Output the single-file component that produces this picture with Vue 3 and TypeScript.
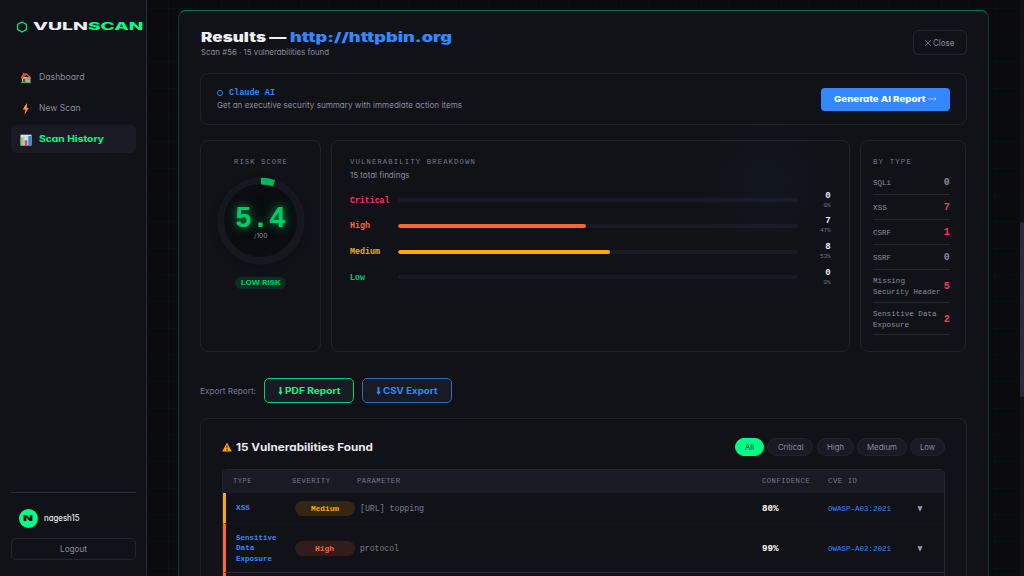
<script setup lang="ts">
import type { Directive } from 'vue'

// Sizes a run of text to an exact advance width by stretching its glyphs.
const vFit: Directive<HTMLElement, number> = {
  mounted(el, binding) {
    const natural = el.getBoundingClientRect().width
    if (!natural) return
    el.style.width = `${binding.value}px`
    el.style.transform = `scaleX(${binding.value / natural})`
  },
}

const severities = [
  { name: 'Critical', w: 39.5, count: 0, pct: 0, bar: 0, tone: 'critical' },
  { name: 'High', w: 20, count: 7, pct: 47, bar: 47, tone: 'high' },
  { name: 'Medium', w: 30, count: 8, pct: 53, bar: 53, tone: 'medium' },
  { name: 'Low', w: 15, count: 0, pct: 0, bar: 0, tone: 'low' },
]

const types = [
  { lines: [{ t: 'SQLi', w: 18 }], count: 0 },
  { lines: [{ t: 'XSS', w: 14 }], count: 7 },
  { lines: [{ t: 'CSRF', w: 18 }], count: 1 },
  { lines: [{ t: 'SSRF', w: 18 }], count: 0 },
  { lines: [{ t: 'Missing', w: 32 }, { t: 'Security Header', w: 67.5 }], count: 5 },
  { lines: [{ t: 'Sensitive Data', w: 63.5 }, { t: 'Exposure', w: 36 }], count: 2 },
]

const filters = [
  { name: 'All', w: 9, box: 29 },
  { name: 'Critical', w: 25.5, box: 46 },
  { name: 'High', w: 17, box: 37 },
  { name: 'Medium', w: 30, box: 50 },
  { name: 'Low', w: 15, box: 35 },
]

const rows = [
  { type: [{ t: 'XSS', w: 14 }], sev: 'Medium', sw: 28, tone: 'medium', param: '[URL] topping', pw: 64, conf: '80%', cve: 'OWASP-A03:2021' },
  { type: [{ t: 'Sensitive', w: 40.5 }, { t: 'Data', w: 18.5 }, { t: 'Exposure', w: 36 }], sev: 'High', sw: 19, tone: 'high', param: 'protocol', pw: 39, conf: '99%', cve: 'OWASP-A02:2021' },
]
</script>

<template>
  <div class="app">
    <aside class="sidebar">
      <div class="logo">
        <svg class="hex" width="12" height="12" viewBox="0 0 12 12"><path d="M6 1 10.4 3.4V8.6L6 11 1.6 8.6V3.4Z" /></svg>
        <span v-fit="55" class="fit logo-a">VULN</span><span v-fit="55.5" class="fit logo-b">SCAN</span>
      </div>
      <nav>
        <a class="nav-item">
          <svg width="12" height="12" viewBox="0 0 12 12">
            <rect x="2" y="5" width="8.5" height="5.5" fill="#d9a679" /><path d="M.5 5.8 3 2V.8h1.5V2L6.3.8l5.2 5-1 .8L6.3 3 2 6.8Z" fill="#d4573a" />
            <rect x="3" y="6.8" width="2.2" height="3.7" fill="#6d4436" /><rect x="6.9" y="5.8" width="2.4" height="2.4" fill="#42a5f5" /><path d="M1 10h10v1.2H1z" fill="#43a057" />
          </svg>
          <span v-fit="45.5" class="fit">Dashboard</span>
        </a>
        <a class="nav-item">
          <svg width="12" height="12" viewBox="0 0 12 12"><path d="M6.8.3 2.7 6.5l2.6.2L4.4 11.8 8.9 5.1 6.4 4.8Z" fill="#ff8142" /><path d="M6.8.3 4 5l2.5-.2Z" fill="#ffb057" /></svg>
          <span v-fit="41.5" class="fit">New Scan</span>
        </a>
        <a class="nav-item active">
          <svg width="12" height="12" viewBox="0 0 12 12">
            <rect x=".5" y=".7" width="11" height="10.8" fill="#dce3e6" /><path d="M.5 4h11M.5 7.5h11M4.3.7v10.8M8 .7v10.8" stroke="#b0bec5" stroke-width=".4" />
            <rect x="1" y="3.4" width="2.6" height="8.1" fill="#8bd15f" /><rect x="4.7" y="6.3" width="2.6" height="5.2" fill="#f0368a" /><rect x="8.3" y="2" width="2.7" height="9.5" fill="#2f8fe0" />
          </svg>
          <span v-fit="65" class="fit">Scan History</span>
        </a>
      </nav>
      <div class="side-foot">
        <div class="user">
          <span class="avatar"><span v-fit="10" class="fit">N</span></span>
          <span v-fit="35.5" class="fit user-name">nagesh15</span>
        </div>
        <button class="logout"><span v-fit="27" class="fit">Logout</span></button>
      </div>
    </aside>

    <main class="main">
      <section class="panel">
        <header class="head">
          <div>
            <h1><span v-fit="85.5" class="fit">Results —</span><span v-fit="162" class="fit url">http://httpbin.org</span></h1>
            <p class="sub"><span v-fit="128" class="fit">Scan #56 · 15 vulnerabilities found</span></p>
          </div>
          <button class="close">
            <svg width="8" height="8" viewBox="0 0 8 8"><path d="M1 1.2 7 6.9M7 1.2 1 6.9" /></svg>
            <span v-fit="21.5" class="fit">Close</span>
          </button>
        </header>

        <div class="card ai">
          <div>
            <div class="ai-title">
              <svg width="6" height="8" viewBox="0 0 6 8"><path d="M3 1.2 5.3 2.6V5.4L3 6.8.7 5.4V2.6Z" /></svg>
              <span v-fit="46" class="fit">Claude AI</span>
            </div>
            <div class="ai-sub"><span v-fit="245" class="fit">Get an executive security summary with immediate action items</span></div>
          </div>
          <button class="generate">
            <span v-fit="91.5" class="fit">Generate AI Report</span>
            <svg width="9" height="6" viewBox="0 0 9 6"><path d="M0 3h8M6.3 1.4 8 3 6.3 4.6" /></svg>
          </button>
        </div>

        <div class="stats">
          <div class="card risk">
            <div class="eyebrow"><span v-fit="54" class="fit">RISK SCORE</span></div>
            <div class="gauge">
              <svg class="arc" width="88" height="88" viewBox="-44 -44 88 88"><path d="M0-43.3A43.3 43.3 0 0 1 14.1-40.9L11.9-34.6A36.6 36.6 0 0 0 0-36.6Z" fill="#00b75d" /></svg>
              <div class="dial">
                <span v-fit="51" class="fit score">5.4</span>
                <span v-fit="13.5" class="fit of">/100</span>
              </div>
            </div>
            <div class="risk-tag"><span v-fit="40" class="fit">LOW RISK</span></div>
          </div>

          <div class="card breakdown">
            <div class="eyebrow"><span v-fit="126" class="fit">VULNERABILITY BREAKDOWN</span></div>
            <div class="total"><span v-fit="59.5" class="fit">15 total findings</span></div>
            <div v-for="s in severities" :key="s.name" class="bar-row" :class="s.tone">
              <span class="bar-label"><span v-fit="s.w" class="fit">{{ s.name }}</span></span>
              <span class="track"><span class="fill" :style="{ width: s.bar + '%' }"></span></span>
              <span class="nums">
                <span class="n">{{ s.count }}</span>
                <span class="p">{{ s.pct }}%</span>
              </span>
            </div>
          </div>

          <div class="card types">
            <div class="eyebrow"><span v-fit="39" class="fit">BY TYPE</span></div>
            <div v-for="t in types" :key="t.lines[0].t" class="type-row" :class="{ tall: t.lines.length > 1 }">
              <span class="type-name">
                <span v-for="l in t.lines" :key="l.t" class="line"><span v-fit="l.w" class="fit">{{ l.t }}</span></span>
              </span>
              <span class="type-n" :class="{ hot: t.count > 0 }">{{ t.count }}</span>
            </div>
          </div>
        </div>

        <div class="export">
          <span v-fit="56" class="fit">Export Report:</span>
          <button class="exp pdf">
            <svg width="5" height="8" viewBox="0 0 5 8"><path d="M1.6 0h1.8v4.8h1.4L2.5 8 .2 4.8h1.4z" /></svg>
            <span v-fit="55.5" class="fit">PDF Report</span>
          </button>
          <button class="exp csv">
            <svg width="5" height="8" viewBox="0 0 5 8"><path d="M1.6 0h1.8v4.8h1.4L2.5 8 .2 4.8h1.4z" /></svg>
            <span v-fit="54.5" class="fit">CSV Export</span>
          </button>
        </div>

        <div class="card vulns">
          <div class="vuln-head">
            <svg width="10" height="10" viewBox="0 0 10 10"><path d="M5 .6 9.8 9.4H.2Z" fill="#ffa600" /><path d="M4.4 3.4h1.2L5.3 6.6h-.6zM4.4 7.3h1.2v1.1H4.4z" fill="#17171a" /></svg>
            <h2><span v-fit="137" class="fit">15 Vulnerabilities Found</span></h2>
            <div class="filters">
              <button v-for="(f, i) in filters" :key="f.name" class="pill" :class="{ on: i === 0 }" :style="{ width: f.box + 'px' }">
                <span v-fit="f.w" class="fit">{{ f.name }}</span>
              </button>
            </div>
          </div>
          <div class="table">
            <div class="tr th">
              <span><span v-fit="19" class="fit">TYPE</span></span>
              <span><span v-fit="38.5" class="fit">SEVERITY</span></span>
              <span><span v-fit="43.5" class="fit">PARAMETER</span></span>
              <span><span v-fit="48" class="fit">CONFIDENCE</span></span>
              <span><span v-fit="29.5" class="fit">CVE ID</span></span>
              <span></span>
            </div>
            <div v-for="r in rows" :key="r.cve" class="tr row" :class="[r.tone, { tall: r.type.length > 1 }]">
              <span class="kind"><span v-for="l in r.type" :key="l.t" class="line"><span v-fit="l.w" class="fit">{{ l.t }}</span></span></span>
              <span class="badge"><span v-fit="r.sw" class="fit">{{ r.sev }}</span></span>
              <span class="param"><span v-fit="r.pw" class="fit">{{ r.param }}</span></span>
              <span class="conf"><span v-fit="16.5" class="fit">{{ r.conf }}</span></span>
              <span class="cve"><span v-fit="63" class="fit">{{ r.cve }}</span></span>
              <svg class="caret" width="6" height="6" viewBox="0 0 6 6"><path d="M.4.3h5.2L3 5.7Z" /></svg>
            </div>
            <div class="tr row high"></div>
          </div>
        </div>
      </section>
      <div class="halo"></div>
    </main>
    <div class="scroll"><div class="thumb"></div></div>
  </div>
</template>

<style>
html, body { margin: 0; overflow: hidden; background: #0a0a0f; }
</style>

<style scoped>
* { box-sizing: border-box; }
.app {
  display: flex; width: 1024px; height: 576px; overflow: hidden;
  font-family: Inter, "Liberation Sans", sans-serif; font-feature-settings: "cv11";
  color: #8a8a9c; background: #0a0a0f; font-size: 8.5px;
}
h1, h2, p { margin: 0; }
button { font: inherit; font-feature-settings: inherit; padding: 0; color: inherit; background: none; border: 1px solid #242532; display: flex; align-items: center; justify-content: center; }
svg { flex: none; display: block; }
.fit { display: inline-block; white-space: pre; text-align: left; transform-origin: 0 50%; flex: none; }

.sidebar { width: 147px; flex: none; height: 576px; background: #111217; border-right: 1px solid #292a38; padding: 0 11px; display: flex; flex-direction: column; }
.logo { display: flex; align-items: center; height: 20px; margin-top: 16.5px; padding-left: 5px; font-weight: 800; font-size: 10.5px; }
.hex { margin-right: 5px; fill: none; stroke: #00e67a; stroke-width: 1.3; }
.logo-a { color: #ecedf5; }
.logo-b { color: #00ff88; }
nav { margin-top: 26.5px; display: flex; flex-direction: column; gap: 3px; }
.nav-item { height: 28px; display: flex; align-items: center; gap: 6.5px; padding: 0 0 1px 9px; border-radius: 5px; font-size: 9px; width: 124.5px; }
.nav-item svg { margin-top: 2px; }
.nav-item.active { background: #1a1a24; color: #00ff88; font-weight: 700; }
.side-foot { margin-top: auto; height: 84px; width: 124.5px; border-top: 1px solid #292a38; }
.user { display: flex; align-items: center; height: 20px; margin: 15px 0 10px; padding-left: 7.5px; gap: 6px; }
.avatar { width: 19px; height: 19px; border-radius: 50%; background: #00ff88; color: #0a0a0f; display: flex; align-items: center; justify-content: center; font-weight: 900; font-size: 8px; }
.user-name { color: #e5e6ee; font-weight: 500; }
.logout { width: 124.5px; height: 22px; border-radius: 5px; }

.main {
  flex: 1; padding: 10px 0 0 31px; position: relative;
  background-image: linear-gradient(rgba(0,255,136,.028) 1px, transparent 1px), linear-gradient(90deg, rgba(0,255,136,.028) 1px, transparent 1px);
  background-size: 26.667px 26.667px; background-position: 21px 8px;
}
.panel { width: 810.5px; height: 620px; border: 1px solid #063f2b; border-top-color: #08774a; border-radius: 8px; background: #111217; padding: 0 20.5px 0 21px; }
.halo { position: absolute; left: 549px; top: 114px; width: 140px; height: 140px; border-radius: 50%; background: radial-gradient(circle, rgba(20,70,110,.07), rgba(40,80,150,.02) 50%, transparent 70%); pointer-events: none; }
.card { border: 1px solid #20212c; border-radius: 8px; }

.head { height: 62px; display: flex; justify-content: space-between; align-items: flex-start; }
h1 { display: flex; gap: 3.5px; margin: 18px 0 0 .5px; height: 17px; line-height: 17px; font-size: 13px; font-weight: 900; color: #eeeef5; }
.url { color: #3388ff; }
.sub { line-height: 12px; font-size: 8px; padding-left: .5px; }
.close { width: 54px; height: 25px; margin-top: 19px; border-radius: 6px; gap: 1px; font-size: 8.5px; padding-right: 1px; }
.close svg { fill: none; stroke: #85869a; stroke-width: .8; }

.ai { height: 52px; padding: 0 16px; display: flex; justify-content: space-between; align-items: center; }
.ai-title { display: flex; align-items: center; gap: 5.5px; height: 12px; padding-top: 1px; color: #3388ff; font: bold 8.5px "Liberation Mono", monospace; }
.ai-title svg { fill: none; stroke: #3388ff; stroke-width: 1; }
.ai-sub { height: 14px; line-height: 14px; font-size: 8.2px; }
.generate { width: 129px; height: 23px; background: #3388ff; border: 0; border-radius: 4px; color: #fff; font-weight: 800; font-size: 8.2px; gap: 3px; }
.generate svg { fill: none; stroke: #b7d5ff; stroke-width: .8; }

.stats { display: grid; grid-template-columns: 121px 518.5px 106.5px; gap: 10.2px; margin-top: 15px; height: 212px; }
.eyebrow { font: 7px/10px "Liberation Mono", monospace; letter-spacing: 1.1px; color: #77788a; height: 10px; }
.risk { display: flex; flex-direction: column; align-items: center; padding-top: 16px; }
.gauge { width: 88px; height: 88px; margin-top: 9.5px; border-radius: 50%; background: radial-gradient(circle, #16171f 0 43px, transparent 44px); box-shadow: 0 3px 9px rgba(0,0,0,.16); display: flex; align-items: center; justify-content: center; position: relative; }
.arc { position: absolute; inset: 0; }
.dial { width: 73px; height: 73px; border-radius: 50%; background: radial-gradient(circle at 50% 50%, #0a0b0f 35%, #0d0e13 90%); display: flex; flex-direction: column; align-items: center; }
.score { font: bold 29px/24px "Liberation Mono", monospace; margin-top: 23.5px; color: #00cc66; text-shadow: 0 0 9px rgba(0,204,102,.65), 0 0 18px rgba(0,204,102,.3); }
.of { font-size: 6px; line-height: 7px; margin-top: 0; }
.risk-tag { margin-top: 12px; width: 51px; height: 12px; border-radius: 6px; background: #0e2c23; color: #00cc66; display: flex; align-items: center; justify-content: center; font-size: 6px; font-weight: 700; }

.breakdown { padding: 16px 18px 0 18px; }
.total { height: 12px; line-height: 12px; margin-top: 2px; font-size: 8px; }
.bar-row { height: 25.67px; display: flex; align-items: center; }
.total + .bar-row { margin-top: 6.4px; }
.bar-label { width: 48px; font: bold 8.5px/12px "Liberation Mono", monospace; padding-top: 1px; }
.track { width: 400px; height: 4px; border-radius: 2px; background: #1a1a24; overflow: hidden; display: block; }
.fill { display: block; height: 4px; border-radius: 2px; background: currentColor; }
.nums { margin-left: auto; text-align: right; font-family: "Liberation Mono", monospace; color: #eeeef5; display: flex; flex-direction: column; }
.n { font-size: 9px; font-weight: bold; line-height: 10px; }
.p { font-size: 6px; line-height: 9px; color: #707182; }
.critical { color: #ff3366; }
.high { color: #ff6633; }
.medium { color: #ffaa00; }
.low { color: #00cc66; }

.types { padding: 16px 15.5px 0 12.5px; }
.type-row { height: 25px; padding-top: 2px; border-bottom: 1px solid #252632; display: flex; align-items: center; justify-content: space-between; font: 7.8px/10.7px "Liberation Mono", monospace; }
.eyebrow + .type-row { margin-top: 3px; }
.type-row.tall { height: 32.7px; }
.type-name { white-space: nowrap; }
.line { display: block; height: 10.7px; }
.type-n { font-weight: bold; font-size: 10px; padding-top: 1px; }
.type-n.hot { color: #ff3366; }

.export { display: flex; align-items: center; height: 25px; margin-top: 26px; font-size: 8.2px; color: #77788a; }
.exp { height: 25px; width: 90px; background: #1a1a24; border-radius: 5px; font-weight: 700; font-size: 8.5px; gap: 2px; margin-left: 8px; }
.exp svg { fill: currentColor; }
.pdf { color: #00ff88; border-color: #00cf73; }
.csv { color: #3388ff; border-color: #2c6cc8; width: 89.5px; }

.vulns { margin-top: 15px; height: 220px; padding: 18px 21px 0 20.5px; }
.vuln-head { display: flex; align-items: center; height: 20px; }
h2 { font-size: 10.5px; line-height: 14px; font-weight: 700; color: #e9e9f0; margin-left: 4.5px; padding-top: 2px; }
.filters { margin-left: auto; display: flex; gap: 3.2px; }
.pill { height: 18.5px; border-radius: 10px; background: #1a1a24; border-color: #22232e; font-size: 7.8px; padding-bottom: 1px; }
.pill.on { background: #00ff88; border-color: #00ff88; color: #0a2a1c; }
.table { margin-top: 12px; border: 1px solid #252632; border-radius: 5px 5px 0 0; overflow: hidden; height: 180px; }
.tr { display: grid; grid-template-columns: 59px 65px 405px 65.5px 88px 1fr; align-items: center; }
.th { height: 23px; background: #1a1a24; padding: 0 0 1px 10.5px; font: 7.3px/10px "Liberation Mono", monospace; letter-spacing: .5px; color: #77788a; }
.row { height: 31px; border-left: 3px solid currentColor; border-bottom: 1px solid #15161c; padding: 1px 0 0 10.5px; grid-template-columns: 58.5px 65px 402.5px 65.5px 89.5px 1fr; }
.row.tall { height: 48.5px; padding-top: 2px; border-bottom-color: #2a2b39; }
.kind { font: bold 7.8px/10.7px "Liberation Mono", monospace; color: #3388ff; }
.badge { width: 60px; height: 15px; border-radius: 8px; display: flex; align-items: center; justify-content: center; font: bold 8px/10px "Liberation Mono", monospace; }
.medium .badge { background: #322715; }
.high .badge { background: #321c1c; }
.param { font: 8.8px/12px "Liberation Mono", monospace; color: #7d7e90; padding-top: 1px; }
.conf { font: bold 8.8px/12px "Liberation Mono", monospace; color: #fff; padding-top: 1px; }
.cve { font: 8px/12px "Liberation Mono", monospace; color: #3388ff; }
.caret { fill: #9a9bad; }

.scroll { width: 4px; flex: none; background: #111217; padding-top: 222px; }
.thumb { height: 175px; background: #2a2a3a; border-radius: 2px; }
</style>
